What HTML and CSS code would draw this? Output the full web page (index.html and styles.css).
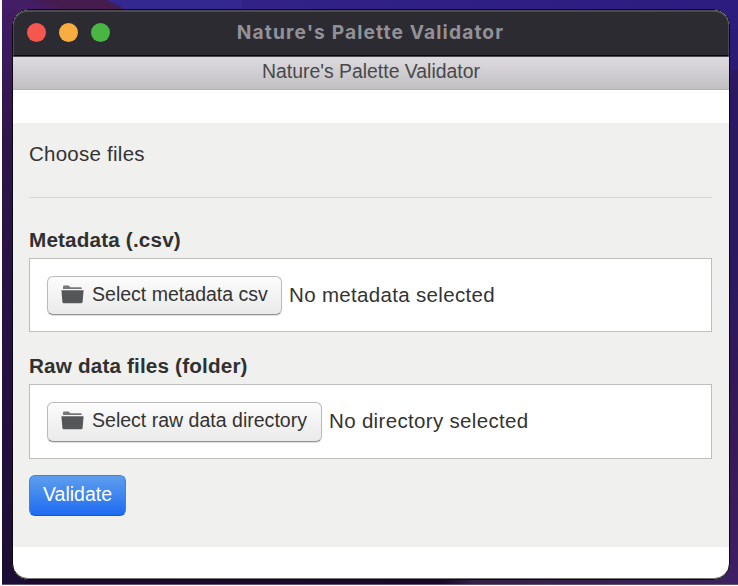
FILE: index.html
```html
<!DOCTYPE html>
<html lang="en">
<head>
<meta charset="utf-8">
<title>Nature's Palette Validator</title>
<link rel="stylesheet" href="styles.css">
</head>
<body>
<div class="desktop">
  <div class="window">
    <header class="titlebar">
      <div class="lights"><i class="light red"></i><i class="light amber"></i><i class="light green"></i></div>
      <span class="title">Nature's Palette Validator</span>
    </header>
    <div class="toolbar"><span>Nature's Palette Validator</span></div>
    <main class="pane">
      <div class="heading"><span>Choose files</span></div>
      <section class="group">
        <label class="caption">Metadata (.csv)</label>
        <div class="field">
          <button class="btn"><svg class="folder" viewBox="0 0 23 19"><path d="M2 4V1.8Q2 .5 3.3.5H7.2Q8 .5 8.5 1.2L9.2 2.2H19.5Q20.8 2.2 20.8 3.4V4Z" fill="#777"/><path d="M.4 5.3H22.6L21.6 17Q21.4 18.3 20.1 18.3H2.9Q1.6 18.3 1.4 17Z"/></svg><span>Select metadata csv</span></button>
          <span class="status">No metadata selected</span>
        </div>
      </section>
      <section class="group">
        <label class="caption">Raw data files (folder)</label>
        <div class="field tall">
          <button class="btn"><svg class="folder" viewBox="0 0 23 19"><path d="M2 4V1.8Q2 .5 3.3.5H7.2Q8 .5 8.5 1.2L9.2 2.2H19.5Q20.8 2.2 20.8 3.4V4Z" fill="#777"/><path d="M.4 5.3H22.6L21.6 17Q21.4 18.3 20.1 18.3H2.9Q1.6 18.3 1.4 17Z"/></svg><span>Select raw data directory</span></button>
          <span class="status">No directory selected</span>
        </div>
      </section>
      <button class="primary">Validate</button>
    </main>
  </div>
</div>
</body>
</html>
```
FILE: styles.css
```css
* { box-sizing: border-box; }
body {
  margin: 0;
  width: 738px;
  height: 586px;
  overflow: hidden;
  background: #fff;
  color: #333;
  font-family: "Liberation Sans", Arial, sans-serif;
}
.desktop {
  margin-left: 2px;
  height: 585px;
  padding: 9px 8px 0 10px;
  border-bottom: 1px solid #625475;
  background:
    linear-gradient(#2c1c80, #2b1b72) right top / 10px 70px no-repeat,
    linear-gradient(#2a1962, #2a1962 35%, #351a56 70%, #3d1f65) right 70px / 10px 515px no-repeat,
    linear-gradient(26.6deg, #431d66 18px, #461c4e 30px, #461c4e 54px, #342790 56px) left top / 240px 9px no-repeat,
    linear-gradient(#431d66, #2d1548 25%, #261244 55%, #1b0d35) left top / 24px 585px no-repeat,
    linear-gradient(90deg, #1a0b2d, #190929 60%, #352047 64%, #3b225c) left bottom / 100% 10px no-repeat,
    linear-gradient(90deg, #34258c, #2c1c80);
}
.window {
  width: 718px;
  height: 571px;
  border: 1px solid #0c0913;
  border-radius: 16px;
  overflow: hidden;
  background: #fff;
  box-shadow: inset 0 -1px #777;
}
.titlebar {
  display: grid;
  grid-template-columns: 100px 1fr 100px;
  align-items: center;
  height: 46px;
  padding-bottom: 2px;
  border: solid #4b4a50;
  border-width: 2px 1px 0;
  border-radius: 15px 15px 0 0;
  border-bottom: 1px solid #09090b;
  background: #2c2b31;
}
.lights { display: flex; gap: 13px; padding-left: 13px; }
.light { width: 19px; height: 19px; border-radius: 50%; }
.red { background: #f5564d; }
.amber { background: #f8ad41; }
.green { background: #49b543; }
.title {
  justify-self: center;
  margin: 0 1px 2px 0;
  color: #929197;
  font: 700 19.2px/24px Inter, sans-serif;
  letter-spacing: 1.12px;
  white-space: nowrap;
}
.toolbar {
  display: flex;
  justify-content: center;
  height: 34px;
  padding-top: 3px;
  border-top: 1px solid #4c494e;
  border-bottom: 1px solid #b4b2b4;
  background: linear-gradient(#dedbe0, #c0bfc1);
  color: #484848;
  font-size: 19.4px;
  line-height: 22px;
}
.pane {
  height: 424px;
  margin-top: 33px;
  padding: 0 17px 0 16px;
  background: #f0f0ee;
}
.heading {
  height: 75px;
  padding-top: 19px;
  border-bottom: 1px solid #d4d4d3;
  font-size: 20.5px;
  line-height: 24px;
  letter-spacing: .25px;
}
.group { padding-top: 30px; }
.group + .group { padding-top: 22px; }
.caption {
  display: block;
  height: 30px;
  color: #303030;
  font-size: 20.7px;
  font-weight: bold;
  line-height: 23px;
  letter-spacing: .16px;
}
.field {
  display: flex;
  align-items: center;
  height: 74px;
  padding: 0 17px;
  border: 1px solid #bebebd;
  background: #fff;
}
.field.tall { height: 75px; }
.btn {
  display: flex;
  align-items: center;
  width: 235px;
  height: 39px;
  padding: 0 0 2px 13px;
  border: 1px solid #bababa;
  border-bottom-color: #929292;
  border-radius: 6px;
  background: linear-gradient(#fcfcfc, #eaeaea);
  box-shadow: 0 1px 1px #0002;
  color: #333;
  font: 19.55px/24px "Liberation Sans", Arial, sans-serif;
  white-space: nowrap;
}
.tall .btn { width: 275px; height: 40px; padding-bottom: 3px; }
.folder { width: 23px; height: 19px; margin-right: 8px; fill: #555658; }
.status { margin-left: 7px; font-size: 20.5px; line-height: 24px; letter-spacing: .33px; white-space: nowrap; }
.tall .status { margin-top: -2px; }
.primary {
  display: block;
  width: 97px;
  height: 41px;
  margin-top: 16px;
  padding: 0 0 3px;
  border: 1px solid #3b82ee;
  border-bottom-color: #1657cb;
  border-radius: 6px;
  background: linear-gradient(#5e9eed, #1e6cf2);
  color: #fff;
  font: 19.5px/24px "Liberation Sans", Arial, sans-serif;
}
```
